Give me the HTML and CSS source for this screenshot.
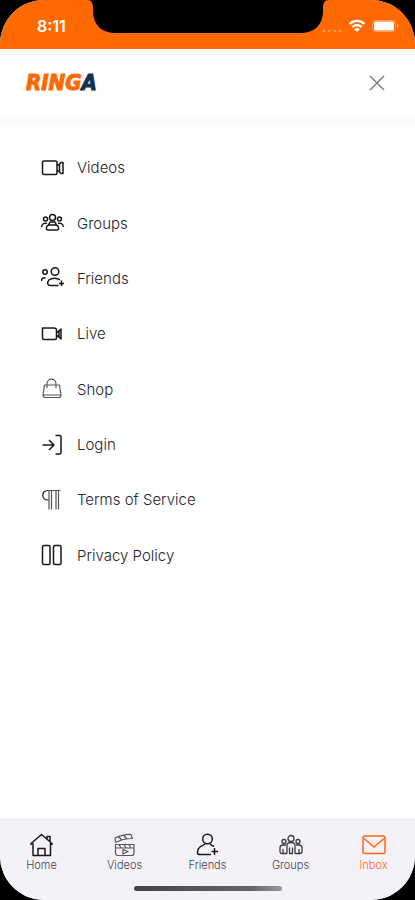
FILE: index.html
```html
<!DOCTYPE html>
<html lang="en">
<head>
    <meta charset="UTF-8">
    <meta name="viewport" content="width=device-width, initial-scale=1.0">
    <title>Ringa</title>
    <link rel="stylesheet" href="styles.css">
</head>
<body>
    <div class="phone">
        <div class="status-bar">
            <span class="time">8:11</span>
            <svg class="notch" width="250" height="34" viewBox="0 0 250 34" aria-hidden="true">
                <path d="M4 0C10 0 10 5 10 10C10 25 18 33 34 33H216C232 33 240 25 240 10C240 5 240 0 246 0Z" fill="#000"/>
            </svg>
            <div class="status-icons">
                <svg width="20" height="4" viewBox="0 0 20 4" fill="#ff9d5c" aria-hidden="true">
                    <circle cx="2" cy="2" r="1.3"/><circle cx="7" cy="2" r="1.3"/><circle cx="13" cy="2" r="1.3"/><circle cx="18" cy="2" r="1.3"/>
                </svg>
                <svg width="18" height="14" viewBox="0 0 18 14" fill="none" stroke="#fff" stroke-width="2.2" aria-hidden="true">
                    <path d="M1.5 5C5.8 .8 12.2 .8 16.5 5M4.3 8.1C7 5.5 11 5.5 13.7 8.1"/>
                    <path d="M6.2 10.2C7.8 8.7 10.2 8.7 11.8 10.2L9 13Z" fill="#fff" stroke="none"/>
                </svg>
                <svg width="27" height="12" viewBox="0 0 27 12" aria-hidden="true">
                    <rect x=".5" y=".5" width="23" height="11" rx="3" fill="none" stroke="#ff9d5c"/>
                    <rect x="2" y="1.5" width="20" height="9" rx="1.5" fill="#fff"/>
                    <path d="M25 4C27 4.5 27 7.5 25 8Z" fill="#ffc6a0"/>
                </svg>
            </div>
        </div>

        <header class="header">
            <a class="logo" href="#">RING<span>A</span></a>
            <button class="close" type="button" aria-label="Close menu">
                <svg width="16" height="16" viewBox="0 0 16 16" stroke="#858585" stroke-width="1.6"><path d="M1 1L15 15M15 1L1 15"/></svg>
            </button>
        </header>

        <nav class="menu">
            <a href="#">
                <svg viewBox="0 0 24 24"><path d="M3 5H14.5Q16 5 16 6.5V17Q16 18.5 14.5 18.5H3Q1.5 18.5 1.5 17V6.5Q1.5 5 3 5ZM16 10L18.5 8V16L16 14M18.5 8L20 6.5H22V17.5H20L18.5 16"/></svg>
                Videos
            </a>
            <a href="#">
                <svg viewBox="0 0 24 24"><circle cx="11.5" cy="6.5" r="3"/><circle cx="4.5" cy="8" r="2"/><circle cx="18.5" cy="8" r="2"/><path d="M7 19C4.5 19 5 14.5 8 14H15C18 14.5 18.5 19 16 19ZM7.5 14L9 11H14L15.5 14M.5 16C1 13 3 11.5 6 12.5M22.5 16C22 13 20 11.5 17 12.5"/></svg>
                Groups
            </a>
            <a href="#">
                <svg viewBox="0 0 24 24"><circle cx="14" cy="5.5" r="3.8"/><circle cx="4" cy="6" r="2.3"/><path d="M.5 15C.5 12.5 2 11.5 4.5 12M17.5 19.5H9.5C6 19.5 6 16 8 14C11 11.5 16 11.5 19 14M20.5 14.5V20M18 17.5H23"/></svg>
                Friends
            </a>
            <a href="#">
                <svg viewBox="0 0 24 24"><path d="M2.5 6H12.5Q15.5 6 15.5 8V16Q15.5 17.5 14 17.5H3Q1.5 17.5 1.5 16V6ZM15.5 11L20 7V17L15.5 13M18 9V15"/></svg>
                Live
            </a>
            <a href="#">
                <svg class="soft" viewBox="0 0 24 24"><path d="M3.5 8H18.5L20 18Q20 20.5 17.5 20.5H4.5Q2 20.5 2 18ZM6 11V7C6 .5 15 .5 15 7V11M2.5 18H19.5"/></svg>
                Shop
            </a>
            <a href="#">
                <svg viewBox="0 0 24 24"><path d="M1.5 12H13M8 7L13 12L8 17M14.5 2.5H18.5Q20 2.5 20 4V19.5Q20 21 18.5 21H14.5"/></svg>
                Login
            </a>
            <a href="#">
                <svg class="soft" viewBox="0 0 24 24"><path d="M19.5 2.5H7M7 12H8M8 3V21.5M10.5 3V21.5M15 3V21.5M17.5 3V21.5"/><path class="bowl" d="M7 2.5C0 2.5 0 12 7 12"/></svg>
                Terms of Service
            </a>
            <a href="#">
                <svg viewBox="0 0 24 24"><rect x="1.5" y="2.5" width="7.5" height="19" rx="1.5"/><rect x="12.5" y="2.5" width="7.5" height="19" rx="1.5"/></svg>
                Privacy Policy
            </a>
        </nav>

        <nav class="tab-bar">
            <a href="#">
                <svg viewBox="0 0 24 24"><path d="M1 12V10.5L11.5 1.5L22 10.5V12M3 10V22.5H20.5V10M17 6V3.5H20V9M8 22V15.5H15V22"/></svg>
                Home
            </a>
            <a href="#">
                <svg class="soft" viewBox="0 0 24 24"><path d="M2.5 11.5H21V20Q21 22.5 18.5 22.5H5Q2.5 22.5 2.5 20ZM2.5 15H21M6 11.5L8 15M11 11.5L13 15M16 11.5L18 15M2.5 9.5L2 5Q11 1 18 1.5L19.5 5.5Q10 5.5 2.5 9.5M6 4L8.5 7M11 2.5L13.5 5.5M10 16.5L15 18.5L10 21Z"/></svg>
                Videos
            </a>
            <a href="#">
                <svg viewBox="0 0 24 24"><circle cx="11.5" cy="6" r="4.8"/><path d="M15 21.5H3C.5 21.5 1.5 16 3.5 14.5C5.5 12.5 8 12.5 9 10.5M14 10.5Q15 12.5 18 13.5M18.5 15V22M15.5 18.5H22"/></svg>
                Friends
            </a>
            <a href="#">
                <svg class="crowd" viewBox="0 0 24 24"><circle cx="12" cy="5.5" r="3"/><circle cx="5" cy="8.5" r="2"/><circle cx="19" cy="8.5" r="2"/><path d="M8 20.5V12.5C8 8.5 16 8.5 16 12.5V20.5M10.5 14.5V20.5H13.5V14.5M8 20.5H3Q1 20.5 1 18.5V15Q1 12 4 12H7M16 20.5H21Q23 20.5 23 18.5V15Q23 12 20 12H17M4 16V20.5M20 16V20.5"/></svg>
                Groups
            </a>
            <a class="active" href="#">
                <svg viewBox="0 0 24 24"><path d="M3 3H21Q23 3 23 5V18.500Q23 20.5 21 20.5H3Q1 20.5 1 18.5V5Q1 3 3 3ZM2 5.5L12 14L22 5.5"/></svg>
                Inbox
            </a>
            <span class="home-indicator"></span>
        </nav>
    </div>
</body>
</html>
```
FILE: styles.css
```css
* {
    box-sizing: border-box;
}

body {
    margin: 0;
    background-color: #000;
    font-family: Inter, "Liberation Sans", sans-serif;
}

a {
    color: inherit;
    text-decoration: none;
}

svg {
    display: block;
    flex: none;
}

.phone {
    display: flex;
    flex-direction: column;
    min-height: 100vh;
    background-color: #fff;
    border-radius: 44px;
    overflow: hidden;
}

.status-bar {
    position: relative;
    display: flex;
    justify-content: space-between;
    align-items: center;
    height: 49px;
    padding: 3px 16px 0 37px;
    background-color: #ff6900;
    color: #fff;
}

.time {
    font-size: 16px;
    font-weight: 600;
}

.notch {
    position: absolute;
    top: 0;
    left: 50%;
    transform: translateX(-50%);
}

.status-icons {
    display: flex;
    align-items: center;
    gap: 6px;
}

.status-icons svg:first-child {
    align-self: flex-end;
}

.header {
    display: flex;
    justify-content: space-between;
    align-items: center;
    height: 69px;
    padding: 0 26px 2px;
    box-shadow: 0 7px 0 #fafafa;
}

.logo {
    font-family: "DejaVu Sans Condensed", "DejaVu Sans", sans-serif;
    font-size: 22px;
    font-weight: 700;
    font-style: italic;
    color: #ff6900;
    -webkit-text-stroke: 1px currentColor;
}

.logo span {
    color: #14304f;
}

.close {
    padding: 4px;
    border: none;
    background: none;
    cursor: pointer;
}

.menu {
    display: grid;
    grid-auto-rows: 1fr;
    min-height: 443px;
    margin-top: 22px;
    padding: 0 41px;
}

.menu a {
    display: flex;
    align-items: center;
    gap: 12px;
    font-size: 15px;
    font-weight: 300;
    color: #24242c;
}

.menu svg,
.tab-bar svg {
    width: 24px;
    height: 24px;
    fill: none;
    stroke: #17171f;
    stroke-width: 1.5;
    stroke-linejoin: round;
}

.menu .soft,
.tab-bar .soft {
    stroke: #55555c;
    stroke-width: 1.2;
}

.menu .bowl {
    stroke: #17171f;
}

.tab-bar .crowd {
    stroke: #38383f;
    stroke-width: 1.3;
}

.tab-bar {
    position: relative;
    display: grid;
    grid-template-columns: repeat(5, 1fr);
    height: 82px;
    margin-top: auto;
    padding-top: 15px;
    background-color: #f4f2f8;
}

.tab-bar a {
    display: flex;
    flex-direction: column;
    align-items: center;
    gap: 1px;
    font-size: 11px;
    line-height: 15px;
    font-weight: 300;
    color: #44444c;
}

.tab-bar .active {
    color: #ff6230;
}

.tab-bar .active svg {
    stroke: #ff6514;
}

.home-indicator {
    position: absolute;
    left: 50%;
    bottom: 9px;
    width: 148px;
    height: 5px;
    border-radius: 3px;
    background: linear-gradient(to right, #444, #666 80%, #999);
    transform: translateX(-50%);
}
```
